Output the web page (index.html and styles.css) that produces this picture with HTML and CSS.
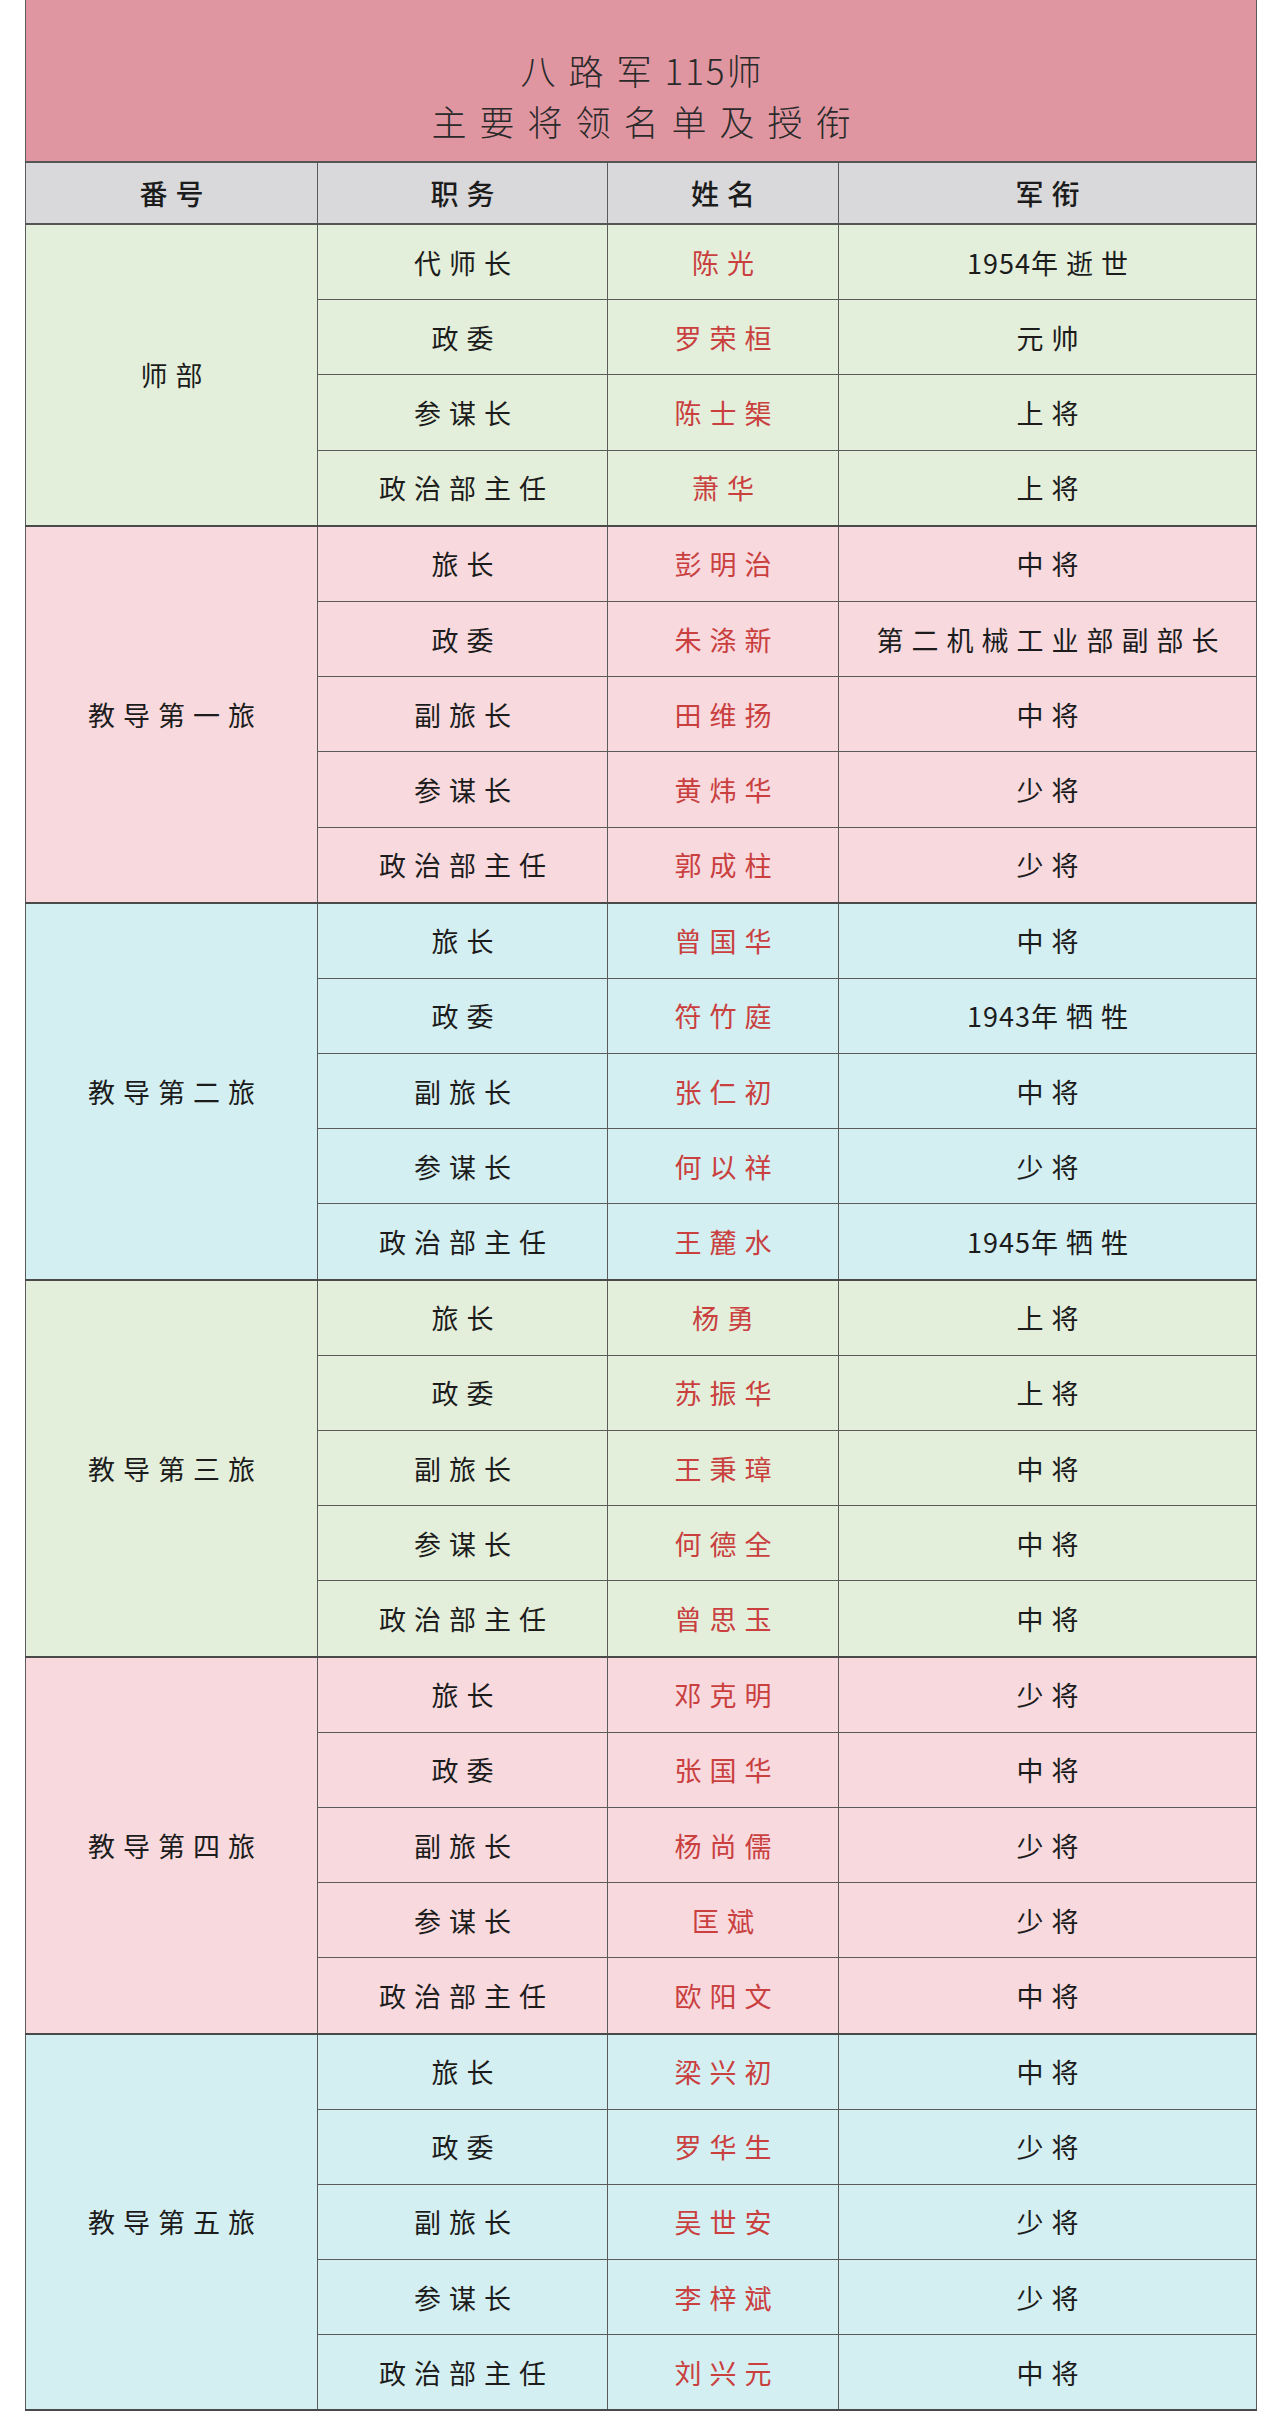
FILE: index.html
```html
<!DOCTYPE html>
<html lang="zh-CN">
<head>
<meta charset="utf-8">
<title>八路军115师主要将领名单及授衔</title>
<link rel="stylesheet" href="styles.css">
</head>
<body>
<div class="page">
<table class="roster">
  <colgroup>
    <col class="c1"><col class="c2"><col class="c3"><col class="c4">
  </colgroup>
  <tr class="title-row">
    <td colspan="4" class="title">
      <div class="title-line">八路军<span class="num">115</span>师</div>
      <div class="title-line">主要将领名单及授衔</div>
    </td>
  </tr>
  <tr class="head-row">
    <th>番号</th><th>职务</th><th>姓名</th><th>军衔</th>
  </tr>

  <tr class="g-green first">
    <td rowspan="4" class="unit">师部</td>
    <td>代师长</td><td class="name">陈光</td><td><span class="num">1954</span>年逝世</td>
  </tr>
  <tr class="g-green"><td>政委</td><td class="name">罗荣桓</td><td>元帅</td></tr>
  <tr class="g-green"><td>参谋长</td><td class="name">陈士榘</td><td>上将</td></tr>
  <tr class="g-green"><td>政治部主任</td><td class="name">萧华</td><td>上将</td></tr>

  <tr class="g-pink first">
    <td rowspan="5" class="unit">教导第一旅</td>
    <td>旅长</td><td class="name">彭明治</td><td>中将</td>
  </tr>
  <tr class="g-pink"><td>政委</td><td class="name">朱涤新</td><td>第二机械工业部副部长</td></tr>
  <tr class="g-pink"><td>副旅长</td><td class="name">田维扬</td><td>中将</td></tr>
  <tr class="g-pink"><td>参谋长</td><td class="name">黄炜华</td><td>少将</td></tr>
  <tr class="g-pink"><td>政治部主任</td><td class="name">郭成柱</td><td>少将</td></tr>

  <tr class="g-blue first">
    <td rowspan="5" class="unit">教导第二旅</td>
    <td>旅长</td><td class="name">曾国华</td><td>中将</td>
  </tr>
  <tr class="g-blue"><td>政委</td><td class="name">符竹庭</td><td><span class="num">1943</span>年牺牲</td></tr>
  <tr class="g-blue"><td>副旅长</td><td class="name">张仁初</td><td>中将</td></tr>
  <tr class="g-blue"><td>参谋长</td><td class="name">何以祥</td><td>少将</td></tr>
  <tr class="g-blue"><td>政治部主任</td><td class="name">王麓水</td><td><span class="num">1945</span>年牺牲</td></tr>

  <tr class="g-green first">
    <td rowspan="5" class="unit">教导第三旅</td>
    <td>旅长</td><td class="name">杨勇</td><td>上将</td>
  </tr>
  <tr class="g-green"><td>政委</td><td class="name">苏振华</td><td>上将</td></tr>
  <tr class="g-green"><td>副旅长</td><td class="name">王秉璋</td><td>中将</td></tr>
  <tr class="g-green"><td>参谋长</td><td class="name">何德全</td><td>中将</td></tr>
  <tr class="g-green"><td>政治部主任</td><td class="name">曾思玉</td><td>中将</td></tr>

  <tr class="g-pink first">
    <td rowspan="5" class="unit">教导第四旅</td>
    <td>旅长</td><td class="name">邓克明</td><td>少将</td>
  </tr>
  <tr class="g-pink"><td>政委</td><td class="name">张国华</td><td>中将</td></tr>
  <tr class="g-pink"><td>副旅长</td><td class="name">杨尚儒</td><td>少将</td></tr>
  <tr class="g-pink"><td>参谋长</td><td class="name">匡斌</td><td>少将</td></tr>
  <tr class="g-pink"><td>政治部主任</td><td class="name">欧阳文</td><td>中将</td></tr>

  <tr class="g-blue first">
    <td rowspan="5" class="unit">教导第五旅</td>
    <td>旅长</td><td class="name">梁兴初</td><td>中将</td>
  </tr>
  <tr class="g-blue"><td>政委</td><td class="name">罗华生</td><td>少将</td></tr>
  <tr class="g-blue"><td>副旅长</td><td class="name">吴世安</td><td>少将</td></tr>
  <tr class="g-blue"><td>参谋长</td><td class="name">李梓斌</td><td>少将</td></tr>
  <tr class="g-blue"><td>政治部主任</td><td class="name">刘兴元</td><td>中将</td></tr>
</table>
</div>
</body>
</html>
```
FILE: styles.css
```css
html, body {
  margin: 0;
  padding: 0;
  background: #ffffff;
}

body {
  font-family: "Noto Sans CJK SC", "Noto Sans", sans-serif;
  color: #1c1c1c;
}

.page {
  padding: 0 16px 0 25px;
}

.roster {
  border-collapse: collapse;
  table-layout: fixed;
  width: 1231px;
}

.c1 { width: 292px; }
.c2 { width: 290px; }
.c3 { width: 231px; }
.c4 { width: 418px; }

.roster td,
.roster th {
  border: 1px solid #5b5b5b;
  text-align: center;
  vertical-align: middle;
  padding: 0;
  font-size: 27px;
  font-weight: 400;
  letter-spacing: 8px;
  text-indent: 8px;
  line-height: 1;
}

.title-row td {
  height: 162px;
}

.roster td.title {
  background: #e096a1;
  border-top: none;
  border-bottom: 2px solid #555;
  vertical-align: top;
  padding-top: 44px;
  box-sizing: border-box;
  font-weight: 300;
  color: #2a2a2a;
}

.title-line {
  font-size: 35px;
  line-height: 51px;
  letter-spacing: 13px;
  text-indent: 13px;
}

.title-line .num {
  letter-spacing: 2px;
}

.head-row th {
  height: 60px;
  background: #d9d9db;
  font-size: 28px;
  font-weight: 500;
  border-bottom: 2px solid #555;
}

.roster tr.g-green td,
.roster tr.g-pink td,
.roster tr.g-blue td {
  height: 74.2px;
}

.g-green td { background: #e3efda; }
.g-pink td { background: #f7d9de; }
.g-blue td { background: #d4eff1; }

.roster tr.first td {
  border-top: 2px solid #4a4a4a;
}

.roster tr:last-child td,
.roster td.unit {
  border-bottom: 2px solid #4a4a4a;
}

.roster td.name {
  color: #c9403f;
}

.num {
  letter-spacing: 1px;
}
```
